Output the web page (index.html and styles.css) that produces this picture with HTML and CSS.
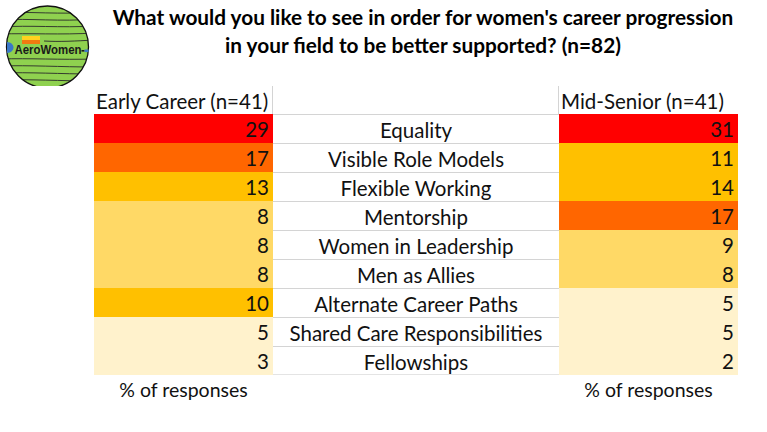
FILE: index.html
```html
<!DOCTYPE html>
<html lang="en">
<head>
<meta charset="utf-8">
<title>Women's career progression</title>
<link rel="stylesheet" href="styles.css">
</head>
<body>
<div class="page">
  <header class="top">
    <div class="logo">
      <svg width="94" height="86" viewBox="0 0 94 86" xmlns="http://www.w3.org/2000/svg">
        <defs>
          <clipPath id="c"><circle cx="47.5" cy="47" r="41"/></clipPath>
        </defs>
        <circle cx="47.5" cy="47" r="41" fill="#8fd14f"/>
        <g clip-path="url(#c)" fill="none" stroke="#2a2a2a" stroke-width="0.9">
          <path d="M0 13 C30 11 60 15 95 12"/>
          <path d="M0 20 C30 18 60 22 95 19"/>
          <path d="M0 27 C30 25 60 28 95 26"/>
          <path d="M0 34 C30 33 60 35 95 33"/>
          <path d="M44 41 C60 42 75 41 95 40"/>
          <path d="M0 59 C30 58 60 60 95 59"/>
          <path d="M0 66 C30 65 60 67 95 67"/>
          <path d="M0 73 C30 72 60 74 95 74"/>
          <path d="M0 80 C30 79 60 81 95 81"/>
        </g>
        <circle cx="47.5" cy="47" r="41" fill="none" stroke="#111" stroke-width="1.3"/>
        <path d="M7 42 C11 42 13.5 45 13.5 47.5 C13.5 50 11 53 7 53 Z" fill="#3a78c8"/>
        <rect x="22" y="36" width="18" height="4" fill="#ffd21f"/>
        <rect x="22" y="40" width="18" height="4" fill="#f07a10"/>
        <text x="14.5" y="54" font-family="Liberation Sans, Arial, sans-serif" font-weight="bold" font-size="13.5" fill="#1a1a1a" textLength="67" lengthAdjust="spacingAndGlyphs">AeroWomen</text>
        <rect x="81.5" y="50" width="3" height="1.6" fill="#1a1a1a"/>
        <rect x="84.5" y="49.5" width="4" height="2.6" fill="#3a78c8"/>
      </svg>
    </div>
    <h1 class="title">What would you like to see in order for women's career progression<br>in your field to be better supported? (n=82)</h1>
  </header>

  <div class="table">
    <div class="hd">Early Career (n=41)</div>
    <div class="hd-mid"></div>
    <div class="hd">Mid-Senior (n=41)</div>

    <div class="num c-red">29</div><div class="lab">Equality</div><div class="num c-red">31</div>
    <div class="num c-orange">17</div><div class="lab">Visible Role Models</div><div class="num c-amber">11</div>
    <div class="num c-amber">13</div><div class="lab">Flexible Working</div><div class="num c-amber">14</div>
    <div class="num c-gold">8</div><div class="lab">Mentorship</div><div class="num c-orange">17</div>
    <div class="num c-gold">8</div><div class="lab">Women in Leadership</div><div class="num c-gold">9</div>
    <div class="num c-gold">8</div><div class="lab">Men as Allies</div><div class="num c-gold">8</div>
    <div class="num c-amber">10</div><div class="lab">Alternate Career Paths</div><div class="num c-pale">5</div>
    <div class="num c-pale">5</div><div class="lab">Shared Care Responsibilities</div><div class="num c-pale">5</div>
    <div class="num c-pale">3</div><div class="lab last">Fellowships</div><div class="num c-pale">2</div>

    <div class="foot">% of responses</div><div class="foot-mid"></div><div class="foot">% of responses</div>
  </div>
</div>
</body>
</html>
```

FILE: styles.css
```css
* { box-sizing: border-box; }
html, body {
  margin: 0;
  padding: 0;
  background: #ffffff;
}
body {
  font-family: "Lato", "Liberation Sans", sans-serif;
  color: #111;
}
.page {
  width: 767px;
  height: 432px;
  overflow: hidden;
}
.top {
  display: flex;
  height: 86px;
}
.logo {
  width: 100px;
  flex: none;
}
.logo svg { display: block; }
.title {
  margin: 0;
  padding-top: 3px;
  width: 646px;
  text-align: center;
  font-size: 20.8px;
  line-height: 28px;
  font-weight: 700;
  color: #000;
  white-space: nowrap;
}
.table {
  display: grid;
  grid-template-columns: 179px 286px 179px;
  grid-auto-rows: 29px;
  grid-template-rows: 28px;
  margin-left: 94px;
  font-size: 20.5px;
}
.hd {
  line-height: 30px;
  padding-left: 2px;
  white-space: nowrap;
}
.hd-mid {
  border-left: 1px solid #d4d4d4;
  border-right: 1px solid #d4d4d4;
  margin-left: -1px;
}
.num {
  text-align: right;
  padding-right: 4px;
  line-height: 31px;
}
.lab {
  text-align: center;
  line-height: 31px;
  border-top: 1px solid #d4d4d4;
  white-space: nowrap;
}
.lab.last { border-bottom: 1px solid #e4e4e4; }
.foot {
  text-align: center;
  line-height: 30px;
  font-size: 19.5px;
}
.c-red { background: #ff0000; }
.c-orange { background: #ff6600; }
.c-amber { background: #ffc000; }
.c-gold { background: #ffd966; }
.c-pale { background: #fff2cc; }
```
